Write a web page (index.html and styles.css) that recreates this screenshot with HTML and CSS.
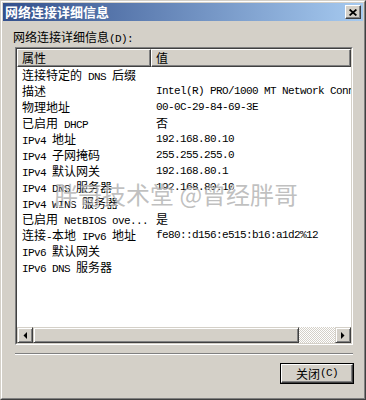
FILE: index.html
```
<!DOCTYPE html>
<html>
<head>
<meta charset="utf-8">
<link rel="stylesheet" href="styles.css">
</head>
<body>
<div class="window">
  <div class="frame">
    <div class="titlebar">
      <span class="title">网络连接详细信息</span>
      <div class="closebtn">
        <svg width="8" height="7" viewBox="0 0 8 7"><path d="M0.6 0.5L7.4 6.5M7.4 0.5L0.6 6.5" stroke="#000" stroke-width="1.7" fill="none"/></svg>
      </div>
    </div>
    <div class="content">
      <div class="label">网络连接详细信息<span class="l">(D):</span></div>
      <div class="listbox">
        <div class="listinner">
          <div class="header">
            <div class="hcell c1">属性</div>
            <div class="hcell c2">值</div>
          </div>
          <div class="rows">
            <div class="row"><div class="cell c1">连接特定的<span class="l"> DNS </span>后缀</div><div class="cell c2"></div></div>
            <div class="row"><div class="cell c1">描述</div><div class="cell c2 l">Intel(R) PRO/1000 MT Network Connection</div></div>
            <div class="row"><div class="cell c1">物理地址</div><div class="cell c2 l">00-0C-29-84-69-3E</div></div>
            <div class="row"><div class="cell c1">已启用<span class="l"> DHCP</span></div><div class="cell c2">否</div></div>
            <div class="row"><div class="cell c1"><span class="l">IPv4 </span>地址</div><div class="cell c2 l">192.168.80.10</div></div>
            <div class="row"><div class="cell c1"><span class="l">IPv4 </span>子网掩码</div><div class="cell c2 l">255.255.255.0</div></div>
            <div class="row"><div class="cell c1"><span class="l">IPv4 </span>默认网关</div><div class="cell c2 l">192.168.80.1</div></div>
            <div class="row"><div class="cell c1"><span class="l">IPv4 DNS </span>服务器</div><div class="cell c2 l">192.168.80.10</div></div>
            <div class="row"><div class="cell c1"><span class="l">IPv4 WINS </span>服务器</div><div class="cell c2"></div></div>
            <div class="row"><div class="cell c1">已启用<span class="l"> NetBIOS ove...</span></div><div class="cell c2">是</div></div>
            <div class="row"><div class="cell c1">连接<span class="l">-</span>本地<span class="l"> IPv6 </span>地址</div><div class="cell c2 l">fe80::d156:e515:b16:a1d2%12</div></div>
            <div class="row"><div class="cell c1"><span class="l">IPv6 </span>默认网关</div><div class="cell c2"></div></div>
            <div class="row"><div class="cell c1"><span class="l">IPv6 DNS </span>服务器</div><div class="cell c2"></div></div>
          </div>
          <div class="hscroll">
            <div class="sbtn"><svg width="4" height="7" viewBox="0 0 4 7"><path d="M4 0V7L0.5 3.5Z" fill="#000"/></svg></div>
            <div class="thumb"></div>
            <div class="track"></div>
            <div class="sbtn"><svg width="4" height="7" viewBox="0 0 4 7"><path d="M0 0V7L3.5 3.5Z" fill="#000"/></svg></div>
          </div>
          <div class="watermark">胖哥技术堂 @曾经胖哥</div>
        </div>
      </div>
      <div class="sep"></div>
      <div class="btnrow">
        <div class="btn"><div class="btnface">关闭<span class="l">(C)</span></div></div>
      </div>
    </div>
  </div>
</div>
</body>
</html>
```

FILE: styles.css
```
* { box-sizing: border-box; }
html, body { margin: 0; padding: 0; }
body {
  background: #d4d0c8;
  font-family: "Noto Sans CJK SC", "Noto Sans", sans-serif;
  font-size: 12px;
  color: #000;
}
.l {
  font-family: "Liberation Mono", "DejaVu Sans Mono", monospace;
  font-size: 11px;
  letter-spacing: -0.6px;
  white-space: pre;
}
.window {
  width: 366px;
  height: 400px;
  border: 1px solid;
  border-color: #d4d0c8 #404040 #404040 #d4d0c8;
  background: #d4d0c8;
}
.frame {
  height: 100%;
  border: 1px solid;
  border-color: #fff #808080 #808080 #fff;
  padding: 1px;
}
.titlebar {
  height: 18px;
  display: flex;
  align-items: flex-start;
  justify-content: space-between;
  background: linear-gradient(to right, #33508c, #a6caf0);
}
.title {
  color: #fff;
  font-weight: bold;
  font-size: 13px;
  line-height: 18px;
  padding-left: 2px;
}
.closebtn {
  width: 16px;
  height: 14px;
  margin: 2px 2px 0 0;
  background: #d4d0c8;
  border: 1px solid;
  border-color: #fff #404040 #404040 #fff;
  box-shadow: inset -1px -1px #808080;
  display: flex;
  align-items: center;
  justify-content: center;
}
.content {
  padding: 0 10px 0 10px;
}
.label {
  margin-top: 9px;
  line-height: 14px;
  height: 14px;
}
.listbox {
  margin: 3px 0 0 2px;
  width: 338px;
  height: 298px;
  border: 1px solid;
  border-color: #808080 #fff #fff #808080;
}
.listinner {
  position: relative;
  height: 100%;
  border: 1px solid;
  border-color: #404040 #d4d0c8 #d4d0c8 #404040;
  background: #fff;
  display: flex;
  flex-direction: column;
  overflow: hidden;
}
.header {
  display: flex;
  height: 18px;
  flex: none;
}
.hcell {
  background: #d4d0c8;
  border: 1px solid;
  border-color: #fff #404040 #404040 #fff;
  box-shadow: inset -1px -1px #808080;
  line-height: 16px;
  padding-left: 4px;
}
.hcell.c1 { width: 134px; }
.hcell.c2 { flex: 1; }
.rows {
  flex: 1;
}
.row {
  display: flex;
  height: 16px;
  line-height: 16px;
  white-space: nowrap;
}
.cell {
  overflow: hidden;
  white-space: nowrap;
  padding-left: 5px;
}
.cell.c1 { width: 134px; flex: none; }
.cell.c2 { flex: 1; }
.hscroll {
  display: flex;
  height: 16px;
  flex: none;
}
.sbtn, .thumb {
  background: #d4d0c8;
  border: 1px solid;
  border-color: #d4d0c8 #404040 #404040 #d4d0c8;
  box-shadow: inset 1px 1px #fff, inset -1px -1px #808080;
}
.sbtn {
  width: 16px;
  display: flex;
  align-items: center;
  justify-content: center;
}
.thumb { width: 266px; }
.track {
  flex: 1;
  background: repeating-conic-gradient(#fff 0 25%, #d4d0c8 0 50%) 0 0 / 2px 2px;
}
.watermark {
  position: absolute;
  left: 37px;
  top: 133px;
  font-size: 24px;
  line-height: 24px;
  white-space: nowrap;
  color: rgba(130, 130, 130, 0.5);
  text-shadow: 1px 1px 0 rgba(255, 255, 255, 0.7);
}
.sep {
  margin: 8px 0 0 2px;
  width: 338px;
  height: 2px;
  border-top: 1px solid #808080;
  border-bottom: 1px solid #fff;
}
.btnrow {
  display: flex;
  justify-content: flex-end;
  margin-top: 8px;
  margin-right: -1px;
}
.btn {
  width: 74px;
  height: 21px;
  border: 1px solid #000;
}
.btnface {
  height: 100%;
  border: 1px solid;
  border-color: #fff #404040 #404040 #fff;
  box-shadow: inset -1px -1px #808080;
  display: flex;
  align-items: center;
  justify-content: center;
  line-height: 17px;
}
```
